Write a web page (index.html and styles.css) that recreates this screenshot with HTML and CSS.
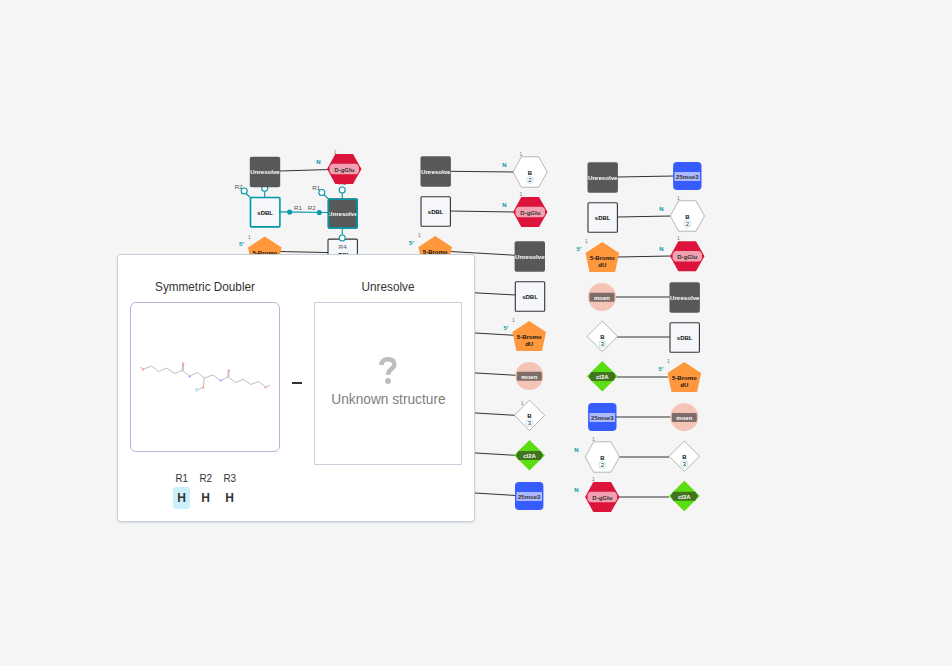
FILE: index.html
```html
<!DOCTYPE html>
<html lang="en">
<head>
<meta charset="utf-8">
<title>Macromolecule canvas</title>
<link rel="stylesheet" href="styles.css">
</head>
<body>
<main class="editor">
<svg class="canvas" width="952" height="666" viewBox="0 0 952 666">
  <defs>
    <g id="unres"><rect x="-15.2" y="-15.2" width="30.4" height="30.4" rx="2" fill="#585858"/><text class="label light" y="2.4" textLength="29.4" lengthAdjust="spacingAndGlyphs">Unresolve</text></g>
    <g id="sdbl"><rect class="chem" x="-14.7" y="-14.7" width="29.4" height="29.4" rx="1"/><text class="label" y="2.7">sDBL</text></g>
    <g id="glu"><path d="M-17.2 0-9-15H8.7L17.2 0 8.7 15H-9Z" fill="#dc143c"/><path d="M-14.7-2.5Q-13.5-5.2-11.5-5.2H11.5Q13.5-5.2 14.7-2.5V2.5Q13.5 5.2 11.5 5.2H-11.5Q-13.5 5.2-14.7 2.5Z" fill="#fff" opacity=".6"/><text class="label tint" y="3">D-gGlu</text></g>
    <g id="b2"><path class="hollow" d="M-17 0-8.7-15.2H8.7L17.2 0 8.7 15.2H-8.7Z"/><text class="label" y="3">B</text><circle class="count" cy="8" r="3.5"/><text class="number" y="10.1">2</text></g>
    <g id="bromo"><path d="M0-15 16.8-4 12.8 15H-12.8L-16.8-4Z" fill="#ff983c"/><text class="label" y="3">5-Bromo</text><text class="label" y="10">dU</text></g>
    <g id="moen"><circle r="14" fill="#f4c5b6"/><rect x="-12.5" y="-4.3" width="25" height="9" rx="1.3" fill="#7d6c67"/><text class="label light" y="2.7">moen</text></g>
    <g id="b3"><path class="hollow" d="M0-15.2 15.2 0 0 15.2-15.2 0Z"/><text class="label" y="2.7">B</text><circle class="count" cy="7.7" r="3.5"/><text class="number" y="9.8">3</text></g>
    <g id="cl"><path d="M0-15.3 15.4 0 0 15.3-15.4 0Z" fill="#5add11"/><path d="M-13.5 0-11-4.3H11L13.5 0 11 4.7H-11Z" fill="#42741f"/><text class="label light" y="2.6">cl2A</text></g>
    <g id="moe"><rect x="-14.2" y="-14" width="28.4" height="28" rx="4" fill="#365cff"/><rect x="-12.8" y="-4" width="25.6" height="9" fill="#adbaff"/><text class="label tint" y="2.8" textLength="22.5" lengthAdjust="spacingAndGlyphs">25moe3</text></g>
  </defs>

  <g class="bonds">
    <path d="M280 171 330 169.5M280 251.5 329 252.6"/>
    <path d="M450 171.3 514 172M450 211 514 212M450 251.5 516 255.3M450 291.5 516 295M450 331.5 514 335.3M450 371.5 516 375.3M450 411.5 515 415.3M450 451.5 515 455.3M450 491.5 516 495.5"/>
    <path d="M617 177 674 176M617 217 671 216M617 257 671 256"/>
    <path d="M616 297H670M617 337H670M617 377H668M616 417H671M619 457H669M619 497H669"/>
  </g>

  <text class="rgroup" x="342.5" y="185">R3</text>
  <g class="attach"><path d="M264.7 191V198M246 193.5 251 198M280 211.9 328 212.5M324 194.7 328.5 199M342.3 193V199M342.3 228V235"/><circle cx="264.7" cy="188.3" r="3"/></g>

  <use href="#unres" x="265" y="172"/><use href="#glu" x="344.3" y="169"/>
  <use class="picked" href="#sdbl" x="265.2" y="212.2"/><use href="#unres" x="342.8" y="213.5"/>
  <rect class="selection" x="328.5" y="199.2" width="28.7" height="28.7" rx="1"/>
  <use href="#bromo" x="264.8" y="251.5"/><use href="#sdbl" x="342.7" y="253.8"/>
  <g class="attach">
    <circle cx="244.2" cy="191" r="3"/><circle cx="321.8" cy="192.5" r="3"/><circle cx="342.2" cy="190" r="3"/><circle cx="342.2" cy="238" r="3"/>
    <circle class="joined" cx="289.7" cy="212" r="2"/><circle class="joined" cx="319.3" cy="212.5" r="2"/>
  </g>
  <g class="rgroup"><text x="238.7" y="188.5">R2</text><text x="298" y="210">R1</text><text x="311.7" y="210">R2</text><text x="316.3" y="189.5">R1</text><text x="342.7" y="248.5">R4</text></g>

  <use href="#unres" x="435.7" y="171.5"/><use href="#b2" x="530" y="172"/>
  <use href="#sdbl" x="435.7" y="211.5"/><use href="#glu" x="530.3" y="212"/>
  <use href="#bromo" x="435.2" y="251"/><use href="#unres" x="529.8" y="256.5"/>
  <use href="#sdbl" x="530" y="296.5"/><use href="#bromo" x="529.2" y="336"/>
  <use href="#moen" x="529.3" y="376"/><use href="#b3" x="529.5" y="415.3"/>
  <use href="#cl" x="529.5" y="455.3"/><use href="#moe" x="529.2" y="496"/>

  <use href="#unres" x="602.7" y="177.5"/><use href="#moe" x="687.3" y="176"/>
  <use href="#sdbl" x="602.7" y="217.5"/><use href="#b2" x="687.3" y="216"/>
  <use href="#bromo" x="602.3" y="257"/><use href="#glu" x="687.3" y="256.2"/>
  <use href="#moen" x="602" y="297"/><use href="#unres" x="684.7" y="297.5"/>
  <use href="#b3" x="602.3" y="336.3"/><use href="#sdbl" x="684.7" y="337.5"/>
  <use href="#cl" x="602.3" y="376.3"/><use href="#bromo" x="684.3" y="377"/>
  <use href="#moe" x="602.3" y="417"/><use href="#moen" x="684.3" y="417.2"/>
  <use href="#b2" x="602.3" y="457"/><use href="#b3" x="684.3" y="456.2"/>
  <use href="#glu" x="602.3" y="497"/><use href="#cl" x="684.3" y="496"/>

  <g class="index"><text x="335.2" y="153.5">1</text><text x="249.5" y="238.5">1</text><text x="521" y="155.5">1</text><text x="521" y="195.5">1</text><text x="419.5" y="237">1</text><text x="513.5" y="322">1</text><text x="522.2" y="405">1</text><text x="678.3" y="200">1</text><text x="678.3" y="240">1</text><text x="586.5" y="243">1</text><text x="668.5" y="363">1</text><text x="593.3" y="441">1</text><text x="593.3" y="481">1</text></g>
  <g class="terminus"><text x="318.5" y="164">N</text><text x="504.3" y="167">N</text><text x="504.3" y="207">N</text><text x="661.5" y="211">N</text><text x="661.5" y="251">N</text><text x="576.5" y="452">N</text><text x="576.5" y="492">N</text><text x="241.5" y="246">5'</text><text x="411.5" y="245">5'</text><text x="506" y="330">5'</text><text x="579" y="251">5'</text><text x="661" y="371">5'</text></g>
</svg>

<section class="popup">
  <div class="monomer">
    <h2>Symmetric Doubler</h2>
    <div class="structure">
      <svg width="148" height="148" viewBox="131 303 148 148">
        <path class="chain" d="M140 367 143 369.3 151.5 366 158.7 371.5 166.7 368 174.3 373.5 182.3 370.5 189.5 376 197.5 372.5 204.3 378 213 375 220.3 380.5 228.3 377 235.5 382.5 243.3 379.3 251 384.5 258.5 381.5 265.5 387 270 385.3M182.2 370.5 182.6 364M183.2 370.5 183.6 364M227.8 377 228.2 371M228.8 377 229.2 371M204.3 378 203.3 387.5 198 389.5"/>
        <path class="oxygen" d="M142 369.5H144M182 363.5H184.2M227.7 370.5H229.9M202.3 387.5H204.3M264.5 387.5H266.5"/>
        <path class="nitrogen" d="M188.5 376.5H191M219.5 380.5H222"/>
        <rect x="195" y="388" width="3.3" height="3.5" fill="#bcecfb"/>
      </svg>
    </div>
    <div class="points">
      <div class="point"><span>R1</span><b class="active">H</b></div>
      <div class="point"><span>R2</span><b>H</b></div>
      <div class="point"><span>R3</span><b>H</b></div>
    </div>
  </div>
  <div class="link"><i></i></div>
  <div class="monomer unknown">
    <h2>Unresolve</h2>
    <div class="structure">
      <svg width="18" height="28" viewBox="0 0 18 28"><path d="M2.5 9C2.500 5.300 5 3.300 9 3.300S15.300 5.300 15.300 8.700C15.300 12.800 9.200 13 9.200 18.800" fill="none" stroke="#bdbdbd" stroke-width="4.600"/><circle cx="9" cy="25" r="2.900" fill="#bdbdbd"/></svg>
      <p>Unknown structure</p>
    </div>
  </div>
</section>
</main>
</body>
</html>
```
FILE: styles.css
```css
* { box-sizing: border-box; }
body { margin: 0; background: #f5f5f5; font-family: "Liberation Sans", Arial, sans-serif; color: #333; }
.editor { position: relative; width: 952px; height: 666px; overflow: hidden; }
.canvas { display: block; }
.canvas text { text-anchor: middle; }
.label { font-size: 6px; font-weight: 700; fill: #111; }
.label.light { fill: #fff; }
.label.tint { fill: #333; }
.picked { --edge: #0097a8; --edge-width: 1.6; }
.chem { fill: #f5f7fb; stroke: var(--edge, #333); stroke-width: var(--edge-width, 1.1); }
.hollow { fill: #fff; stroke: #999; stroke-width: .7; }
.count { fill: #fff; stroke: #a5d8e6; stroke-width: .7; }
.number { font-size: 6px; fill: #222; }
.bonds { fill: none; stroke: #333; stroke-width: 1; }
.attach { fill: #fff; stroke: #0097a8; stroke-width: 1.1; }
.attach .joined { fill: #0097a8; }
.selection { fill: none; stroke: #0097a8; stroke-width: 1.6; }
.rgroup { font-size: 6.2px; fill: #555; }
.index { font-size: 5px; fill: #777; }
.terminus { font-size: 6px; font-weight: 700; fill: #0097a8; }

.popup { position: absolute; left: 117px; top: 254px; width: 358px; height: 268px; display: flex; padding: 24px 12px 0; background: #fff; border: 1px solid #c5d0dc; border-radius: 4px; box-shadow: 0 1px 2px rgba(80, 100, 120, .2); }
.monomer { width: 150px; }
.monomer h2 { margin: 0 0 7px; height: 16px; line-height: 16px; font-size: 12.5px; font-weight: 400; text-align: center; transform: scaleX(.94); }
.structure { height: 150px; border: 1px solid #b4b9dc; border-radius: 6px; }
.structure svg { display: block; }
.chain { fill: none; stroke: #888; stroke-width: .55; }
.oxygen { stroke: #f5a0a0; stroke-width: 1.8; }
.nitrogen { stroke: #9aa8ff; stroke-width: 1.6; }
.points { display: flex; justify-content: center; gap: 7px; margin-top: 19px; padding-left: 1px; }
.point { width: 17px; display: flex; flex-direction: column; align-items: center; font-size: 10.5px; line-height: 14px; }
.point span { transform: scaleX(.94); }
.point b { width: 17px; height: 22px; margin-top: 2px; border-radius: 3px; line-height: 22px; font-size: 12px; text-align: center; }
.point b.active { background: #cdeffb; }
.link { width: 34px; padding-top: 103px; }
.link i { display: block; width: 10px; height: 2px; margin-left: 12px; background: #333; }
.unknown { width: 148px; }
.unknown .structure { height: 163px; border-color: #c8d1de; border-radius: 0; display: flex; flex-direction: column; align-items: center; padding-top: 53px; }
.unknown p { margin: 6px 0 0; font-size: 14.5px; line-height: 18px; color: #808080; white-space: nowrap; transform: scaleX(.945); }
```
